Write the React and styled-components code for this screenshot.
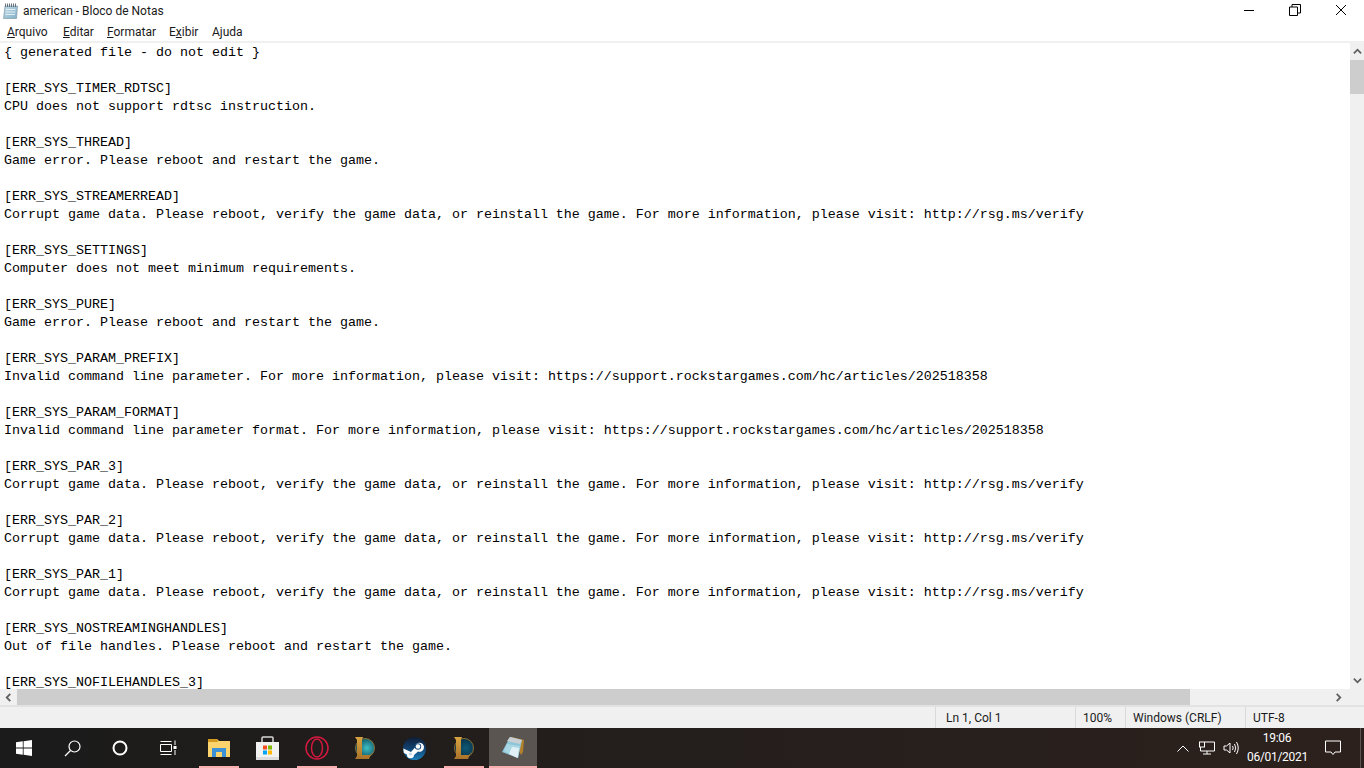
import styled, { createGlobalStyle } from 'styled-components';

const lines = [
  '{ generated file - do not edit }',
  '',
  '[ERR_SYS_TIMER_RDTSC]',
  'CPU does not support rdtsc instruction.',
  '',
  '[ERR_SYS_THREAD]',
  'Game error. Please reboot and restart the game.',
  '',
  '[ERR_SYS_STREAMERREAD]',
  'Corrupt game data. Please reboot, verify the game data, or reinstall the game. For more information, please visit: http://rsg.ms/verify',
  '',
  '[ERR_SYS_SETTINGS]',
  'Computer does not meet minimum requirements.',
  '',
  '[ERR_SYS_PURE]',
  'Game error. Please reboot and restart the game.',
  '',
  '[ERR_SYS_PARAM_PREFIX]',
  'Invalid command line parameter. For more information, please visit: https://support.rockstargames.com/hc/articles/202518358',
  '',
  '[ERR_SYS_PARAM_FORMAT]',
  'Invalid command line parameter format. For more information, please visit: https://support.rockstargames.com/hc/articles/202518358',
  '',
  '[ERR_SYS_PAR_3]',
  'Corrupt game data. Please reboot, verify the game data, or reinstall the game. For more information, please visit: http://rsg.ms/verify',
  '',
  '[ERR_SYS_PAR_2]',
  'Corrupt game data. Please reboot, verify the game data, or reinstall the game. For more information, please visit: http://rsg.ms/verify',
  '',
  '[ERR_SYS_PAR_1]',
  'Corrupt game data. Please reboot, verify the game data, or reinstall the game. For more information, please visit: http://rsg.ms/verify',
  '',
  '[ERR_SYS_NOSTREAMINGHANDLES]',
  'Out of file handles. Please reboot and restart the game.',
  '',
  '[ERR_SYS_NOFILEHANDLES_3]',
];

const menus = [
  { before: '', key: 'A', after: 'rquivo', width: 56 },
  { before: '', key: 'E', after: 'ditar', width: 44 },
  { before: '', key: 'F', after: 'ormatar', width: 62 },
  { before: 'E', key: 'x', after: 'ibir', width: 43 },
  { before: 'A', key: 'j', after: 'uda', width: 40 },
];

const GlobalStyle = createGlobalStyle`
  html, body { margin: 0; padding: 0; background: #fff; }
  body { font-family: Roboto, "Noto Sans", sans-serif; }
`;

const Desktop = styled.div`
  width: 1364px;
  height: 768px;
  display: flex;
  flex-direction: column;
  overflow: hidden;
`;

const TitleBar = styled.div`
  height: 22px;
  display: flex;
  align-items: center;
  padding-left: 3px;
  font-size: 12px;
  color: #1a1a1a;
`;

const TitleText = styled.span`
  margin-left: 5px;
`;

const WindowButtons = styled.div`
  margin-left: auto;
  display: flex;
  align-items: center;
  margin-bottom: 2px;
`;

const WindowButton = styled.div`
  width: 46px;
  display: flex;
  justify-content: center;
`;

const MenuBar = styled.div`
  height: 19px;
  display: flex;
  align-items: center;
  padding-left: 7px;
  font-size: 12px;
  color: #1a1a1a;
  border-bottom: 2px solid #f0f0f0;
`;

const MenuItem = styled.span`
  width: ${p => p.$w}px;
  u { text-underline-offset: 1px; }
`;

const Body = styled.div`
  height: 646px;
  display: flex;
`;

const Editor = styled.div`
  flex: 1;
  overflow: hidden;
  padding: 1px 0 0 4px;
  font-family: "Liberation Mono", monospace;
  font-size: 13.33px;
  line-height: 18px;
  color: #000;
  white-space: pre;
`;

const Line = styled.div`
  height: 18px;
`;

const VScroll = styled.div`
  width: 14px;
  background: #f0f0f0;
  display: flex;
  flex-direction: column;
  align-items: center;
`;

const ArrowBox = styled.div`
  height: ${p => p.$h}px;
  display: flex;
  align-items: center;
  justify-content: center;
  flex: none;
`;

const VThumb = styled.div`
  width: 100%;
  height: 34px;
  background: #cdcdcd;
  flex: none;
`;

const Spacer = styled.div`
  flex: 1;
`;

const HScroll = styled.div`
  height: 16px;
  display: flex;
  align-items: center;
  background: #f0f0f0;
  border-bottom: 2px solid #e2e2e2;
`;

const HArrow = styled.div`
  width: 17px;
  display: flex;
  justify-content: center;
  flex: none;
`;

const HThumb = styled.div`
  width: 1173px;
  height: 100%;
  background: #cdcdcd;
`;

const StatusBar = styled.div`
  height: 21px;
  display: flex;
  justify-content: flex-end;
  background: #f0f0f0;
  font-size: 12px;
  color: #1a1a1a;
`;

const StatusCell = styled.div`
  width: ${p => p.$w}px;
  box-sizing: border-box;
  padding-left: ${p => p.$pad}px;
  border-left: 1px solid #d9d9d9;
  display: flex;
  align-items: center;
`;

const Taskbar = styled.div`
  height: 40px;
  display: flex;
  align-items: stretch;
  background: linear-gradient(90deg, #1b1b1b 0%, #231e1c 40%, #2c211d 100%);
`;

const Tile = styled.div`
  position: relative;
  width: ${p => p.$w || 48}px;
  margin-left: ${p => p.$ml || 0}px;
  display: flex;
  align-items: center;
  justify-content: center;
  background: ${p => (p.$active ? '#5b5552' : 'transparent')};
`;

const RunBar = styled.div`
  position: absolute;
  left: ${p => (p.$full ? 0 : 5)}px;
  right: ${p => (p.$full ? 0 : 4)}px;
  bottom: 0;
  height: 2px;
  background: #f6aeae;
`;

const Tray = styled.div`
  margin-left: auto;
  display: flex;
  align-items: center;
  color: #fff;
`;

const TrayIcon = styled.div`
  width: 24px;
  display: flex;
  justify-content: center;
`;

const Clock = styled.div`
  width: 60px;
  margin: 0 2px 0 4px;
  text-align: center;
  font-size: 12px;
  letter-spacing: -0.3px;
  line-height: 19px;
  color: #fff;
`;

const Notify = styled.div`
  width: 48px;
  display: flex;
  justify-content: center;
`;

const ShowDesktop = styled.div`
  width: 7px;
  height: 100%;
  box-sizing: border-box;
  padding-left: 3px;
  &::before {
    content: '';
    display: block;
    width: 1px;
    height: 100%;
    background: #5a5452;
  }
`;

const Chevron = ({ d, size = 9 }) => (
  <svg width={size} height={size} viewBox="0 0 10 10">
    <path d={d} fill="none" stroke="#606060" strokeWidth="2" />
  </svg>
);

// the little notepad from the title bar, spiral along the top
const TitleIcon = () => (
  <svg width="15" height="16" viewBox="0 0 15 16">
    <defs>
      <linearGradient id="pageBg" x1="0" y1="0" x2="1" y2="1">
        <stop offset="0" stopColor="#c4dbe6" />
        <stop offset="1" stopColor="#7fb0c8" />
      </linearGradient>
    </defs>
    <path d="M2 3H14.500L13.500 15.500H.5Z" fill="url(#pageBg)" stroke="#71909f" strokeWidth=".6" />
    <path d="M3 6.500H12.500M2.800 9H12.300M2.600 11.500H12" stroke="#e3eff4" />
    <path d="M2.500 .5V4M4.500 .5V4M6.500 .5V4M8.500 .5V4M10.500 .5V4M12.500 .5V4" stroke="#59666e" strokeWidth=".9" />
  </svg>
);

const NotepadIcon = () => (
  <svg width="24" height="24" viewBox="0 0 24 24">
    <path d="M11 1L23 4L22 16L20 19Z" fill="#b3812c" />
    <path d="M9 1L21 4L17 22L1 16Z" fill="#8ec6d8" />
    <path d="M9 1L21 4L19 8L6 5Z" fill="#c9cfd2" />
    <path d="M6 8L19 10L17 22L3 15Z" fill="#a9d8e4" />
    <path d="M11 11L18 12L16.500 22L8 18Z" fill="#e2f1f5" />
  </svg>
);

const LolIcon = ({ id, inner, outer, x }) => (
  <svg width="24" height="24" viewBox="0 0 24 24">
    <defs>
      <radialGradient id={id} cx=".6" cy=".5" r=".6">
        <stop offset="0" stopColor={inner} />
        <stop offset="1" stopColor={outer} />
      </radialGradient>
      <linearGradient id={`${id}g`} x1="0" y1="0" x2="0" y2="1">
        <stop offset="0" stopColor="#d9a440" />
        <stop offset="1" stopColor="#a9722a" />
      </linearGradient>
    </defs>
    <circle cx={x + 10} cy="12" r="9.500" fill={`url(#${id})`} stroke="#a5803a" strokeWidth=".8" />
    <path d={`M${x} 1H${x + 8}L${x + 7} 3.500V19H${x + 15}L${x + 17} 16L${x + 14} 23H${x}L${x + 2} 20V4Z`} fill={`url(#${id}g)`} />
  </svg>
);

const SteamIcon = () => (
  <svg width="23" height="23" viewBox="0 0 23 23">
    <defs>
      <linearGradient id="steamBg" x1="0" y1="0" x2="0" y2="1">
        <stop offset="0" stopColor="#111c35" />
        <stop offset=".5" stopColor="#11426f" />
        <stop offset="1" stopColor="#1a7fb8" />
      </linearGradient>
    </defs>
    <circle cx="11.500" cy="11.500" r="11.500" fill="url(#steamBg)" />
    <path d="M.3 11.500L8 15L12 10.500A4.500 4.500 0 1 1 15 14.500L11 18A3.500 3.500 0 0 1 4 17.500L.8 16Z" fill="#fff" />
    <circle cx="15" cy="9.500" r="3.200" fill="#1b4a7a" />
    <circle cx="15" cy="9.500" r="2.300" fill="#fff" />
    <circle cx="7.500" cy="17" r="1.500" fill="#c8d6e2" />
  </svg>
);

const App = () => (
  <Desktop>
    <GlobalStyle />
    <TitleBar>
      <TitleIcon />
      <TitleText>american - Bloco de Notas</TitleText>
      <WindowButtons>
        <WindowButton>
          <svg width="12" height="12" viewBox="0 0 12 12"><path d="M1 6.500H11" stroke="#000" /></svg>
        </WindowButton>
        <WindowButton>
          <svg width="12" height="12" viewBox="0 0 12 12" fill="none" stroke="#000"><path d="M.5 3H8.500V11.500H.5Z" /><path d="M3 3V.5H11.500V9H8.500" /></svg>
        </WindowButton>
        <WindowButton>
          <svg width="12" height="12" viewBox="0 0 12 12"><path d="M1 1L11 11M11 1L1 11" stroke="#000" /></svg>
        </WindowButton>
      </WindowButtons>
    </TitleBar>
    <MenuBar>
      {menus.map(m => (
        <MenuItem key={m.after} $w={m.width}>{m.before}<u>{m.key}</u>{m.after}</MenuItem>
      ))}
    </MenuBar>
    <Body>
      <Editor>
        {lines.map((l, i) => <Line key={i}>{l}</Line>)}
      </Editor>
      <VScroll>
        <ArrowBox $h={17}><Chevron d="M1 7L5 3L9 7" /></ArrowBox>
        <VThumb />
        <Spacer />
        <ArrowBox $h={17}><Chevron d="M1 3L5 7L9 3" /></ArrowBox>
      </VScroll>
    </Body>
    <HScroll>
      <HArrow><Chevron d="M7 1L3 5L7 9" /></HArrow>
      <HThumb />
      <Spacer />
      <HArrow><Chevron d="M3 1L7 5L3 9" /></HArrow>
      <HArrow />
    </HScroll>
    <StatusBar>
      <StatusCell $w={140} $pad={10}>Ln 1, Col 1</StatusCell>
      <StatusCell $w={50} $pad={7}>100%</StatusCell>
      <StatusCell $w={120} $pad={7}>Windows (CRLF)</StatusCell>
      <StatusCell $w={119} $pad={7}>UTF-8</StatusCell>
    </StatusBar>
    <Taskbar>
      <Tile>
        <svg width="16" height="16" viewBox="0 0 16 16" fill="#fff"><path d="M0 2.300L6.800 1.300V7.600H0ZM7.600 1.200L16 0V7.600H7.600ZM0 8.400H6.800V14.700L0 13.700ZM7.600 8.400H16V16L7.600 14.800Z" /></svg>
      </Tile>
      <Tile>
        <svg width="17" height="17" viewBox="0 0 17 17" fill="none" stroke="#fff" strokeWidth="1.200"><circle cx="10.500" cy="6.500" r="5.500" /><path d="M6.500 10.500L1 16" /></svg>
      </Tile>
      <Tile>
        <svg width="16" height="16" viewBox="0 0 16 16" fill="none" stroke="#fff" strokeWidth="2"><circle cx="8" cy="8" r="6.500" /></svg>
      </Tile>
      <Tile>
        <svg width="17" height="16" viewBox="0 0 17 16" fill="none" stroke="#fff"><path d="M.5 4.500H11.500V11.500H.5ZM.5 1.500H11.500M.5 14.500H11.500M15 .5V5M15 10V15" /><rect x="13.500" y="6" width="3" height="3" fill="#fff" stroke="none" /></svg>
      </Tile>
      <Tile $w={49} $ml={2}>
        <svg width="22" height="18" viewBox="0 0 22 18"><path d="M0 0H9L11 2H22V18H0Z" fill="#fbd46e" /><path d="M0 0H9L10 3H0Z" fill="#d29a1f" /><path d="M4 18V9H18V18H14V13H8V18Z" fill="#3d91d6" /></svg>
        <RunBar />
      </Tile>
      <Tile $w={49}>
        <svg width="23" height="24" viewBox="0 0 23 24"><path d="M6 7V2Q6 1 7 1H16Q17 1 17 2V7" fill="none" stroke="#d8d8d8" strokeWidth="1.500" /><path d="M0 6H23V24H0Z" fill="#f2f2f2" /><path d="M0 21H23V24H0Z" fill="#dcdcdc" /><rect x="7" y="9.500" width="4" height="4" fill="#f25022" /><rect x="12" y="9.500" width="4" height="4" fill="#7fba00" /><rect x="7" y="14.500" width="4" height="4" fill="#00a4ef" /><rect x="12" y="14.500" width="4" height="4" fill="#ffb900" /></svg>
      </Tile>
      <Tile $w={49}>
        <svg width="24" height="24" viewBox="0 0 24 24" fill="none" stroke="#d3193f" strokeWidth="1.500"><circle cx="12" cy="12" r="11" /><ellipse cx="12" cy="12" rx="5.500" ry="9" /></svg>
        <RunBar />
      </Tile>
      <Tile $w={49}><LolIcon id="lolA" inner="#3fc0c4" outer="#0a4a5c" x={1} /></Tile>
      <Tile $w={49}><SteamIcon /></Tile>
      <Tile $w={49}><LolIcon id="lolB" inner="#0f5a78" outer="#082c40" x={2} /><RunBar /></Tile>
      <Tile $w={48} $ml={1} $active><NotepadIcon /><RunBar $full /></Tile>
      <Tray>
        <TrayIcon>
          <svg width="12" height="7" viewBox="0 0 12 7" fill="none" stroke="#fff"><path d="M.5 6.500L6 1L11.500 6.500" /></svg>
        </TrayIcon>
        <TrayIcon>
          <svg width="16" height="14" viewBox="0 0 16 14" fill="none" stroke="#fff"><path d="M6 1H15.500V10H1.500V6M8 10V13M4 13H12" /><rect x=".5" y="1" width="5" height="5" /></svg>
        </TrayIcon>
        <TrayIcon>
          <svg width="16" height="14" viewBox="0 0 16 14" fill="none" stroke="#fff"><path d="M1 5H3.500L7 2V12L3.500 9H1ZM9.500 5Q11 7 9.500 9M11.500 3Q14 7 11.500 11M13.500 1Q17 7 13.500 13" /></svg>
        </TrayIcon>
        <Clock>19:06<br />06/01/2021</Clock>
        <Notify>
          <svg width="16" height="16" viewBox="0 0 16 16" fill="none" stroke="#fff"><path d="M.5 1H15.500V12H10L8 14.500L6 12H.5Z" /></svg>
        </Notify>
        <ShowDesktop />
      </Tray>
    </Taskbar>
  </Desktop>
);

export default App;
